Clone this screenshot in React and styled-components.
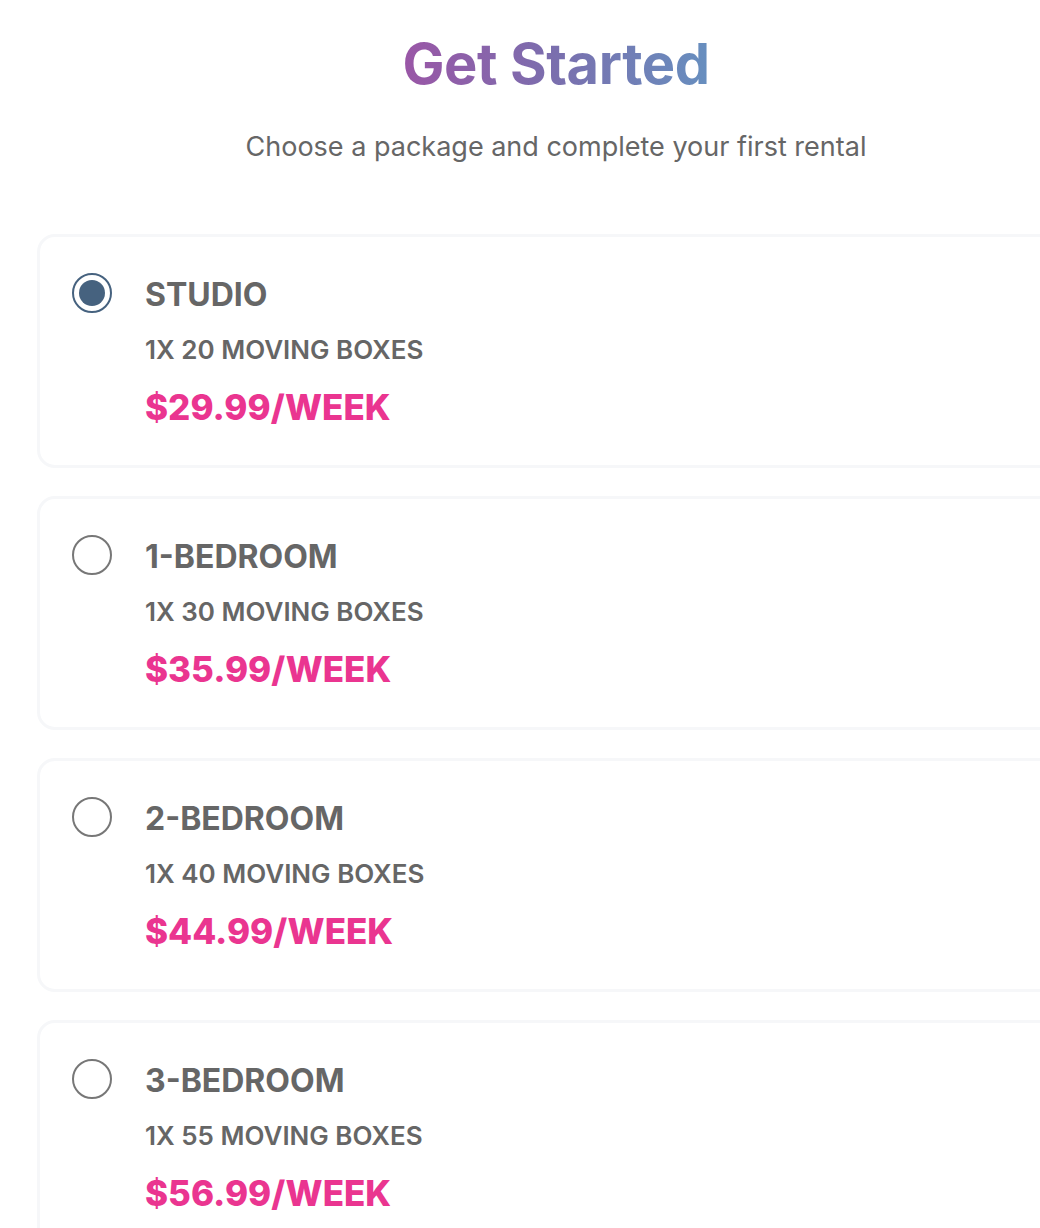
import React, { useState } from 'react'
import styled, { createGlobalStyle } from 'styled-components'

const GlobalStyle = createGlobalStyle`
  html, body {
    margin: 0;
    padding: 0;
    background: #ffffff;
    overflow: hidden;
  }
  body {
    font-family: Inter, "Noto Sans", sans-serif;
  }
`

const Page = styled.div`
  width: 1112px;
  padding: 30px 37px 0;
  box-sizing: border-box;
`

const Header = styled.header`
  text-align: center;
  margin-bottom: 69px;
`

const Title = styled.h1`
  display: inline-block;
  margin: 0;
  font-size: 56px;
  font-weight: 700;
  line-height: 68px;
  letter-spacing: -0.4px;
  background: linear-gradient(90deg, #9a56a6 0%, #7a6fae 50%, #678fbf 100%);
  -webkit-background-clip: text;
  background-clip: text;
  color: transparent;
`

const Subtitle = styled.p`
  margin: 31px 0 0;
  font-size: 27px;
  line-height: 36px;
  color: #666666;
`

const List = styled.div`
  display: flex;
  flex-direction: column;
  gap: 28px;
`

const Card = styled.label`
  display: flex;
  align-items: flex-start;
  gap: 33px;
  height: 234px;
  box-sizing: border-box;
  padding: 36px 32px;
  border: 3px solid #f6f7f9;
  border-radius: 18px;
  cursor: pointer;
`

const Radio = styled.span`
  flex: none;
  width: 40px;
  height: 40px;
  box-sizing: border-box;
  border-radius: 50%;
  border: 2px solid ${p => (p.$checked ? '#46627f' : '#777777')};
  display: flex;
  align-items: center;
  justify-content: center;
  &::after {
    content: '';
    width: 26px;
    height: 26px;
    border-radius: 50%;
    background: #46627f;
    display: ${p => (p.$checked ? 'block' : 'none')};
  }
`

const Info = styled.div`
  display: flex;
  flex-direction: column;
  padding-top: 2px;
`

const Name = styled.div`
  font-size: 32px;
  font-weight: 700;
  line-height: 40px;
  color: #666666;
`

const Boxes = styled.div`
  margin-top: 19px;
  font-size: 26px;
  font-weight: 600;
  line-height: 32px;
  color: #666666;
`

const Price = styled.div`
  margin-top: 19px;
  font-size: 35px;
  font-weight: 800;
  line-height: 44px;
  color: #ea3590;
`

const packages = [
  { name: 'STUDIO', boxes: '1X 20 MOVING BOXES', price: '$29.99/WEEK' },
  { name: '1-BEDROOM', boxes: '1X 30 MOVING BOXES', price: '$35.99/WEEK' },
  { name: '2-BEDROOM', boxes: '1X 40 MOVING BOXES', price: '$44.99/WEEK' },
  { name: '3-BEDROOM', boxes: '1X 55 MOVING BOXES', price: '$56.99/WEEK' }
]

const App = () => {
  const [selected, setSelected] = useState(0)
  return (
    <Page>
      <GlobalStyle />
      <Header>
        <Title>Get Started</Title>
        <Subtitle>Choose a package and complete your first rental</Subtitle>
      </Header>
      <List>
        {packages.map((pkg, i) => (
          <Card key={pkg.name} onClick={() => setSelected(i)}>
            <Radio $checked={selected === i} />
            <Info>
              <Name>{pkg.name}</Name>
              <Boxes>{pkg.boxes}</Boxes>
              <Price>{pkg.price}</Price>
            </Info>
          </Card>
        ))}
      </List>
    </Page>
  )
}

export default App
